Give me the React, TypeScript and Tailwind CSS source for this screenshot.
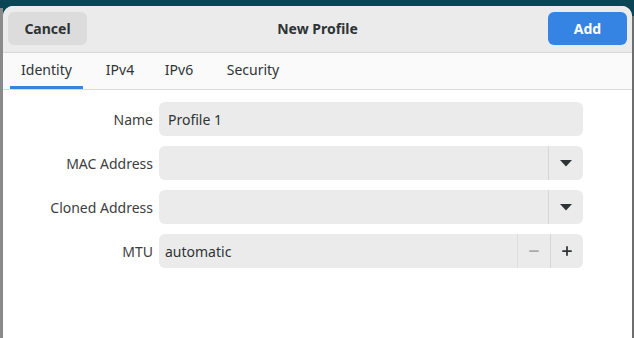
import { Minus, Plus } from "lucide-react"

const tabs = [
  { name: "Identity", cls: "w-[73px] ml-0 border-[#3584e4]" },
  { name: "IPv4", cls: "w-[44px] ml-[15px] border-transparent" },
  { name: "IPv6", cls: "w-[44px] ml-[15px] border-transparent" },
  { name: "Security", cls: "w-[64px] ml-[20px] border-transparent" },
]

function Caret() {
  return (
    <svg width="12" height="7" viewBox="0 0 12 7">
      <path d="M0 0 H12 L6 6.5 Z" fill="#2e3436" />
    </svg>
  )
}

function Row({ label, children }: { label: string; children: React.ReactNode }) {
  return (
    <div className="flex items-center">
      <div className="w-[156px] text-right pr-[6px] text-[14px] text-[#3d3d3d]">{label}</div>
      <div className="w-[424px] h-[34px] rounded-[6px] bg-[#ebebeb] flex items-stretch overflow-hidden">
        {children}
      </div>
    </div>
  )
}

export default function App() {
  return (
    <div
      className="w-[634px] h-[338px] bg-[#0a4556] pt-[6px] flex overflow-hidden"
      style={{ fontFamily: '"Noto Sans", "Open Sans", sans-serif' }}
    >
      <div className="w-[3px] mt-[2px] bg-[#8a8a8a]" />
      <div className="flex-1 bg-white rounded-t-[10px] flex flex-col overflow-hidden">
        {/* header */}
        <div className="h-[47px] bg-[#ebebeb] border-b border-[#d8d8d8] flex items-center justify-between px-[5px] pb-[1px]">
          <button className="w-[79px] h-[33px] rounded-[6px] bg-[#dcdcdc] text-[14px] font-bold text-[#2e3436]">
            Cancel
          </button>
          <div className="text-[14px] font-bold text-[#2e3436]">New Profile</div>
          <button className="w-[79px] h-[33px] rounded-[6px] bg-[#3584e4] text-[14px] font-bold text-white">
            Add
          </button>
        </div>

        {/* tabs */}
        <div className="h-[37px] bg-[#fafafa] border-b border-[#dadada] flex pl-[7px]">
          {tabs.map((t) => (
            <div
              key={t.name}
              className={`flex items-center justify-center text-[14px] text-[#2e3436] border-b-[3px] ${t.cls}`}
            >
              {t.name}
            </div>
          ))}
        </div>

        {/* form */}
        <div className="flex flex-col gap-[10px] pt-[12px]">
          <Row label="Name">
            <div className="flex items-center px-[9px] text-[14px] text-[#2e3436]">Profile 1</div>
          </Row>
          <Row label="MAC Address">
            <div className="flex-1" />
            <div className="w-[35px] border-l border-[#d6d6d6] flex items-center justify-center">
              <Caret />
            </div>
          </Row>
          <Row label="Cloned Address">
            <div className="flex-1" />
            <div className="w-[35px] border-l border-[#d6d6d6] flex items-center justify-center">
              <Caret />
            </div>
          </Row>
          <Row label="MTU">
            <div className="flex-1 flex items-center px-[6px] text-[14px] text-[#2e3436]">automatic</div>
            <div className="w-[33px] border-l border-[#dedede] flex items-center justify-center">
              <Minus className="w-[14px] h-[14px] text-[#a8a8a8]" strokeWidth={3} />
            </div>
            <div className="w-[33px] border-l border-[#d6d6d6] flex items-center justify-center">
              <Plus className="w-[14px] h-[14px] text-[#2e3436]" strokeWidth={3} />
            </div>
          </Row>
        </div>
      </div>
      <div className="w-[2px] mt-[10px] bg-[#6e6e6e]" />
    </div>
  )
}
